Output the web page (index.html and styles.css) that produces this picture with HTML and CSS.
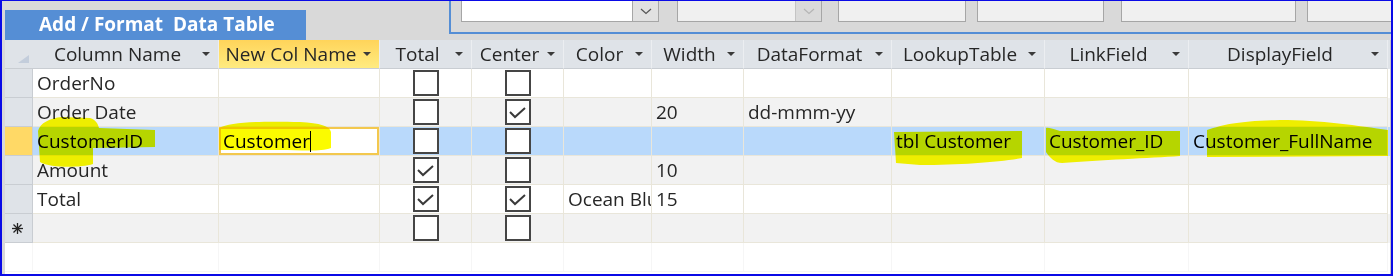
FILE: index.html
```html
<!DOCTYPE html>
<html lang="en">
<head>
  <meta charset="UTF-8">
  <title>Add / Format Data Table</title>
  <link rel="stylesheet" href="styles.css">
</head>
<body>
  <div class="frame">
    <div class="topbar">
      <div class="tab">Add / Format&nbsp; Data Table</div>
      <div class="panel">
        <div class="combo combo-main">
          <div class="combo-field"></div>
          <div class="combo-btn">
            <svg width="12" height="7" viewBox="0 0 12 7"><polyline points="1,1 6,5.5 11,1" fill="none" stroke="#555" stroke-width="1.2"/></svg>
          </div>
        </div>
        <div class="combo combo-off">
          <div class="combo-field"></div>
          <div class="combo-btn">
            <svg width="12" height="7" viewBox="0 0 12 7"><polyline points="1,1 6,5.5 11,1" fill="none" stroke="#b5b5b5" stroke-width="1.2"/></svg>
          </div>
        </div>
        <div class="box box-a"></div>
        <div class="box box-b"></div>
        <div class="box box-c"></div>
        <div class="box box-d"></div>
      </div>
    </div>

    <div class="sheet">
      <!-- header -->
      <div class="row head">
        <div class="cell sel">
          <svg width="12" height="9" viewBox="0 0 12 9"><polygon points="0,8 11,0 11,8" fill="#c3cddb"/></svg>
        </div>
        <div class="cell"><span class="label">Column Name</span><i class="arrow"></i></div>
        <div class="cell active"><span class="label">New Col Name</span><i class="arrow"></i></div>
        <div class="cell"><span class="label">Total</span><i class="arrow"></i></div>
        <div class="cell"><span class="label">Center</span><i class="arrow"></i></div>
        <div class="cell"><span class="label">Color</span><i class="arrow"></i></div>
        <div class="cell"><span class="label">Width</span><i class="arrow"></i></div>
        <div class="cell"><span class="label">DataFormat</span><i class="arrow"></i></div>
        <div class="cell"><span class="label">LookupTable</span><i class="arrow"></i></div>
        <div class="cell"><span class="label">LinkField</span><i class="arrow"></i></div>
        <div class="cell"><span class="label">DisplayField</span><i class="arrow"></i></div>
      </div>

      <div class="row">
        <div class="cell sel"></div>
        <div class="cell">OrderNo</div>
        <div class="cell"></div>
        <div class="cell chk"><span class="box-chk"></span></div>
        <div class="cell chk"><span class="box-chk"></span></div>
        <div class="cell"></div>
        <div class="cell"></div>
        <div class="cell"></div>
        <div class="cell"></div>
        <div class="cell"></div>
        <div class="cell"></div>
      </div>

      <div class="row alt">
        <div class="cell sel"></div>
        <div class="cell">Order Date</div>
        <div class="cell"></div>
        <div class="cell chk"><span class="box-chk"></span></div>
        <div class="cell chk"><span class="box-chk checked"><svg width="22" height="22" viewBox="0 0 22 22"><polyline points="3,11 8,16 18,7" fill="none" stroke="#3a3a3a" stroke-width="2"/></svg></span></div>
        <div class="cell"></div>
        <div class="cell">20</div>
        <div class="cell">dd-mmm-yy</div>
        <div class="cell"></div>
        <div class="cell"></div>
        <div class="cell"></div>
      </div>

      <div class="row current">
        <div class="cell sel"></div>
        <div class="cell">CustomerID</div>
        <div class="cell editing">Customer<span class="caret"></span></div>
        <div class="cell chk"><span class="box-chk"></span></div>
        <div class="cell chk"><span class="box-chk"></span></div>
        <div class="cell"></div>
        <div class="cell"></div>
        <div class="cell"></div>
        <div class="cell">tbl Customer</div>
        <div class="cell">Customer_ID</div>
        <div class="cell">Customer_FullName</div>
      </div>

      <div class="row alt">
        <div class="cell sel"></div>
        <div class="cell">Amount</div>
        <div class="cell"></div>
        <div class="cell chk"><span class="box-chk checked"><svg width="22" height="22" viewBox="0 0 22 22"><polyline points="3,11 8,16 18,7" fill="none" stroke="#3a3a3a" stroke-width="2"/></svg></span></div>
        <div class="cell chk"><span class="box-chk"></span></div>
        <div class="cell"></div>
        <div class="cell">10</div>
        <div class="cell"></div>
        <div class="cell"></div>
        <div class="cell"></div>
        <div class="cell"></div>
      </div>

      <div class="row">
        <div class="cell sel"></div>
        <div class="cell">Total</div>
        <div class="cell"></div>
        <div class="cell chk"><span class="box-chk checked"><svg width="22" height="22" viewBox="0 0 22 22"><polyline points="3,11 8,16 18,7" fill="none" stroke="#3a3a3a" stroke-width="2"/></svg></span></div>
        <div class="cell chk"><span class="box-chk checked"><svg width="22" height="22" viewBox="0 0 22 22"><polyline points="3,11 8,16 18,7" fill="none" stroke="#3a3a3a" stroke-width="2"/></svg></span></div>
        <div class="cell clip">Ocean Blue</div>
        <div class="cell">15</div>
        <div class="cell"></div>
        <div class="cell"></div>
        <div class="cell"></div>
        <div class="cell"></div>
      </div>

      <div class="row alt">
        <div class="cell sel newrec">
          <svg width="11" height="11" viewBox="0 0 11 11"><g stroke="#222" stroke-width="1.3"><line x1="5.5" y1="0" x2="5.5" y2="11"/><line x1="0" y1="5.5" x2="11" y2="5.5"/><line x1="1.5" y1="1.5" x2="9.5" y2="9.5"/><line x1="9.5" y1="1.5" x2="1.5" y2="9.5"/></g></svg>
        </div>
        <div class="cell"></div>
        <div class="cell"></div>
        <div class="cell chk"><span class="box-chk"></span></div>
        <div class="cell chk"><span class="box-chk"></span></div>
        <div class="cell"></div>
        <div class="cell"></div>
        <div class="cell"></div>
        <div class="cell"></div>
        <div class="cell"></div>
        <div class="cell"></div>
      </div>

      <div class="row blank">
        <div class="cell sel"></div>
        <div class="cell"></div>
        <div class="cell"></div>
        <div class="cell"></div>
        <div class="cell"></div>
        <div class="cell"></div>
        <div class="cell"></div>
        <div class="cell"></div>
        <div class="cell"></div>
        <div class="cell"></div>
        <div class="cell"></div>
      </div>
    </div>

    <!-- highlighter marks drawn over the sheet -->
    <svg class="marker" width="1393" height="276" viewBox="0 0 1393 276">
      <g fill="#fbfb00">
        <path d="M38,131 C40,123 50,118 62,117 L90,118 C96,120 98,124 99,128 L155,130 L155,147 L93,148 L93,164 C80,168 50,168 40,162 Z"/>
        <path d="M219,128 C230,122 260,121 300,122 C320,123 330,126 331,132 L331,148 C320,152 300,150 280,150 L219,150 Z"/>
        <path d="M894,132 L1022,131 L1022,158 C1000,162 960,165 920,165 L896,163 Z"/>
        <path d="M1046,128 C1050,127 1055,130 1060,131 L1180,131 L1180,156 C1150,158 1100,160 1062,163 C1055,163 1050,158 1046,152 Z"/>
        <path d="M1207,130 C1225,124 1240,121 1280,120 C1320,120 1360,126 1388,130 L1388,156 L1207,157 Z"/>
      </g>
    </svg>
  </div>
</body>
</html>
```

FILE: styles.css
```css
body {
  margin: 0;
  font-family: 'Open Sans', 'Noto Sans', sans-serif;
  color: #262626;
}

.frame {
  position: relative;
  width: 1393px;
  height: 276px;
  box-sizing: border-box;
  border: 2px solid #0a0ae6;
  border-top-width: 1px;
  background-color: #d9d9d9;
  display: flex;
  flex-direction: column;
  overflow: hidden;
}

/* top strip */

.topbar {
  display: flex;
  align-items: flex-start;
  height: 39px;
  flex-shrink: 0;
}

.tab {
  margin: 9px 0 0 3px;
  width: 301px;
  height: 30px;
  box-sizing: border-box;
  padding: 0 0 2px 34px;
  background-color: #558ed5;
  color: #fff;
  font-weight: bold;
  font-size: 19px;
  display: flex;
  align-items: center;
  white-space: nowrap;
}

.panel {
  margin-left: 143px;
  flex: 1;
  height: 33px;
  box-sizing: border-box;
  border-left: 2px solid #558ed5;
  border-bottom: 2px solid #558ed5;
  padding-left: 10px;
  display: flex;
  align-items: flex-start;
  overflow: hidden;
}

.combo {
  display: flex;
  height: 21px;
  box-sizing: border-box;
  border: 1px solid #a6a6a6;
  border-top: none;
}

.combo-field {
  flex: 1;
}

.combo-btn {
  width: 25px;
  border-left: 1px solid #a6a6a6;
  display: flex;
  align-items: center;
  justify-content: center;
}

.combo-main {
  width: 198px;
  background-color: #fff;
}

.combo-main .combo-btn {
  background-color: #e1e1e1;
}

.combo-off {
  width: 145px;
  margin-left: 18px;
  background-color: #f0f0f0;
}

.combo-off .combo-btn {
  background-color: #dadada;
  border-left-color: #c4c4c4;
}

.box {
  height: 21px;
  box-sizing: border-box;
  border: 1px solid #a6a6a6;
  border-top: none;
  background-color: #f0f0f0;
}

.box-a { width: 128px; margin-left: 16px; }
.box-b { width: 127px; margin-left: 11px; }
.box-c { width: 175px; margin-left: 17px; }
.box-d { flex: 1; margin-left: 11px; border-right: none; }

/* datasheet */

.sheet {
  flex: 1;
  margin-left: 3px;
  background-color: #fff;
  border-right: 1px solid #c4c4c4;
}

.row {
  display: grid;
  grid-template-columns: 28px 186px 161px 92px 92px 88px 92px 148px 153px 144px 199px;
  height: 29px;
  font-size: 19px;
}

.cell {
  box-sizing: border-box;
  border-right: 1px solid #e9e6da;
  border-bottom: 1px solid #e9e6da;
  padding: 0 4px;
  display: flex;
  align-items: center;
  white-space: nowrap;
  overflow: hidden;
}

.cell.sel {
  padding: 0;
  background-color: #dfe3e8;
  border-right: 1px solid #c9cdd2;
  border-bottom: 1px solid #c9cdd2;
  justify-content: center;
}

.row.alt {
  background-color: #f2f2f2;
}

.row.current {
  background-color: #b9d9fb;
  color: #000;
}

.row.current .cell.sel {
  background-color: #ffd966;
}

.row.blank .cell {
  border-color: #f6f6f6;
}

.row.blank .cell.sel {
  background-color: #fff;
}

.cell.newrec {
  justify-content: flex-start;
  padding-left: 7px;
}

.cell.clip {
  padding-right: 0;
  text-overflow: clip;
}

.cell.editing {
  background-color: #fff;
  box-shadow: inset 0 0 0 2px #f3c84e;
  padding-left: 4px;
}

.caret {
  display: inline-block;
  width: 1px;
  height: 21px;
  background-color: #000;
}

/* header */

.row.head {
  background-color: #dfe3e8;
}

.row.head .cell {
  border-right: 1px solid #eceef1;
  border-bottom: 1px solid #c9cdd2;
  padding: 0 8px 0 0;
}

.row.head .cell.sel {
  align-items: flex-end;
  justify-content: flex-end;
  padding: 0 3px 4px 0;
  border-right: none;
}

.row.head .cell.active {
  background: linear-gradient(#ffd45a, #ffeb80);
}

.label {
  flex: 1;
  text-align: center;
}

.arrow {
  width: 0;
  height: 0;
  border-left: 4px solid transparent;
  border-right: 4px solid transparent;
  border-top: 4px solid #3a3a3a;
}

/* check boxes */

.cell.chk {
  justify-content: center;
  padding: 0;
}

.box-chk {
  width: 26px;
  height: 26px;
  box-sizing: border-box;
  border: 2px solid #454545;
  background-color: #fff;
  display: flex;
  align-items: center;
  justify-content: center;
}

.marker {
  position: absolute;
  top: -1px;
  left: -2px;
  pointer-events: none;
  mix-blend-mode: multiply;
}
```
